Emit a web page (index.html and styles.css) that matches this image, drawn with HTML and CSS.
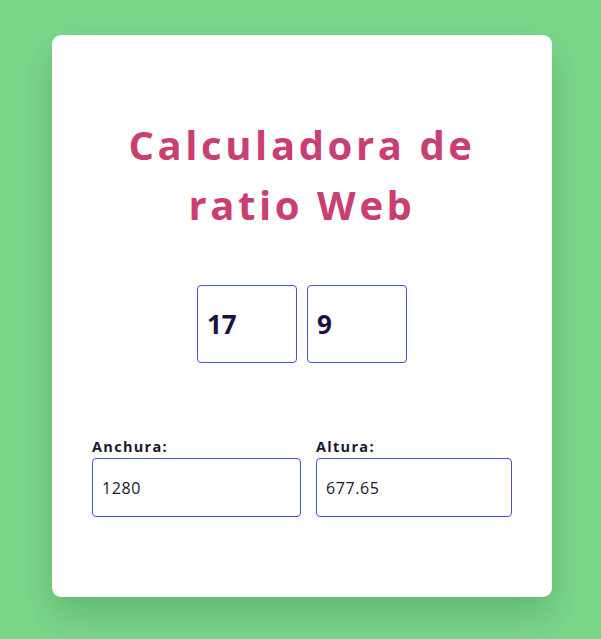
FILE: index.html
```html
<!DOCTYPE html>
<html lang="es">
<head>
<meta charset="utf-8">
<title>Calculadora de ratio Web</title>
<link rel="stylesheet" href="styles.css">
</head>
<body>
<main class="card">
  <h1 class="title">Calculadora de<br>ratio Web</h1>
  <div class="ratio">
    <div class="ratio-box">17</div>
    <div class="ratio-box">9</div>
  </div>
  <div class="dims">
    <div class="field">
      <label class="label">Anchura:</label>
      <div class="input">1280</div>
    </div>
    <div class="field">
      <label class="label">Altura:</label>
      <div class="input">677.65</div>
    </div>
  </div>
</main>
</body>
</html>
```

FILE: styles.css
```css
html, body {
  margin: 0;
  padding: 0;
}
body {
  background: #7ad78a;
  font-family: "Open Sans", "Noto Sans", sans-serif;
  height: 639px;
  overflow: hidden;
  padding-top: 35px;
  box-sizing: border-box;
}
.card {
  width: 500px;
  height: 562px;
  margin: 0 0 0 52px;
  background: #fff;
  border-radius: 9px;
  box-shadow: 0 18px 36px rgba(0, 40, 0, 0.18);
  box-sizing: border-box;
  padding: 80px 40px 0;
}
.title {
  margin: 0;
  text-align: center;
  color: #c93e73;
  font-size: 40px;
  font-weight: 700;
  line-height: 60px;
  letter-spacing: 3.6px;
}
.ratio {
  display: flex;
  justify-content: center;
  gap: 10px;
  margin-top: 50px;
}
.ratio-box {
  width: 100px;
  height: 78px;
  box-sizing: border-box;
  border: 1px solid #4b50d6;
  border-radius: 4px;
  padding-left: 9px;
  display: flex;
  align-items: center;
  font-size: 26px;
  font-weight: 700;
  color: #1b0f45;
}
.dims {
  display: grid;
  grid-template-columns: 209px 196px;
  gap: 15px;
  margin-top: 72px;
}
.field {
  display: flex;
  flex-direction: column;
}
.label {
  font-size: 14.5px;
  font-weight: 700;
  color: #1c1530;
  line-height: 23px;
  letter-spacing: 1.3px;
}
.input {
  height: 59px;
  box-sizing: border-box;
  border: 1px solid #4b50d6;
  border-radius: 4px;
  padding-left: 9px;
  display: flex;
  align-items: center;
  font-size: 16px;
  letter-spacing: 0.6px;
  color: #1c1530;
}
```
